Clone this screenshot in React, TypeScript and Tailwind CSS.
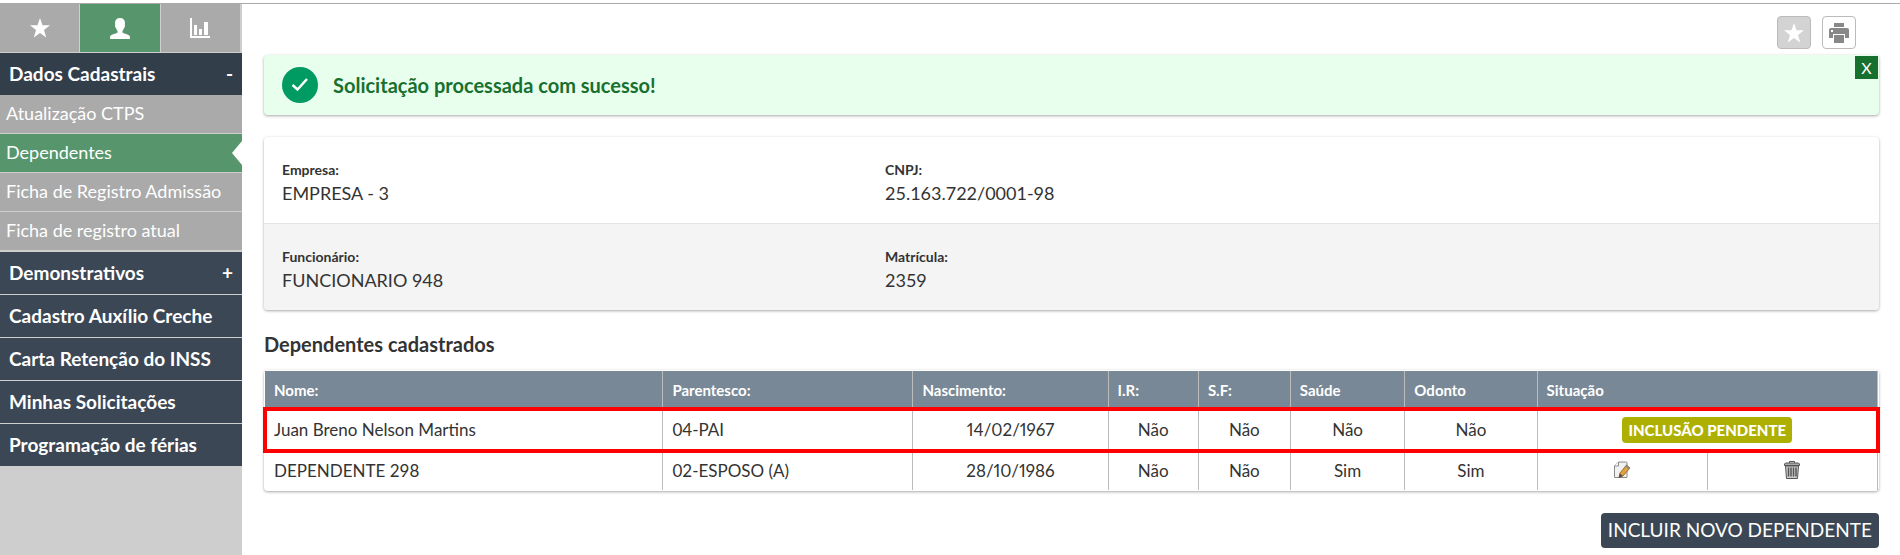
import { useState } from "react";

const subItems = ["Atualização CTPS", "Dependentes", "Ficha de Registro Admissão", "Ficha de registro atual"];
const menuItems = ["Cadastro Auxílio Creche", "Carta Retenção do INSS", "Minhas Solicitações", "Programação de férias"];

const company = [
  { label: "Empresa:", value: "EMPRESA - 3" },
  { label: "CNPJ:", value: "25.163.722/0001-98" },
];

const employee = [
  { label: "Funcionário:", value: "FUNCIONARIO 948" },
  { label: "Matrícula:", value: "2359" },
];

const headers = ["Nome:", "Parentesco:", "Nascimento:", "I.R:", "S.F:", "Saúde", "Odonto"];

const dependents = [
  { name: "Juan Breno Nelson Martins", kinship: "04-PAI", values: ["14/02/1967", "Não", "Não", "Não", "Não"], pending: true },
  { name: "DEPENDENTE 298", kinship: "02-ESPOSO (A)", values: ["28/10/1986", "Não", "Não", "Sim", "Sim"], pending: false },
];

function StarIcon() {
  return (
    <svg width="20" height="20" viewBox="0 0 20 20" fill="currentColor" aria-hidden="true">
      <path d="M10 0l2.500 7.300H20l-6 4.600 2.200 7.600L10 15l-6.200 4.500L6 11.900 0 7.300h7.500z" />
    </svg>
  );
}

function UserIcon() {
  return (
    <svg width="20" height="21" viewBox="0 0 20 21" fill="currentColor" aria-hidden="true">
      <path d="M10 0c3.300 0 5 2 5 5 0 1-.1 1.600-.3 2 .7.600.3 2.200-.6 2.800-.3 1.400-.9 2.400-1.600 3v1.600c1 1 6.500 2 7.200 3.600.3.800.3 2 .3 3H0c0-1 0-2.200.3-3 .7-1.600 6.200-2.600 7.200-3.600v-1.600c-.7-.6-1.300-1.600-1.600-3C5 9.200 4.600 7.600 5.300 7 5.100 6.600 5 6 5 5c0-3 1.700-5 5-5z" />
    </svg>
  );
}

function ChartIcon() {
  return (
    <svg width="20" height="20" viewBox="0 0 20 20" fill="currentColor" aria-hidden="true">
      <path d="M0 0h2v18h18v2H0zM4 7h3v10H4zM9 11h3v6H9zM14 4h4v13h-4z" />
    </svg>
  );
}

function PrinterIcon() {
  return (
    <svg width="20" height="20" viewBox="0 0 20 20" fill="currentColor" aria-hidden="true">
      <path d="M5 0h10v4H5z" />
      <path fillRule="evenodd" d="M2 5h16a2 2 0 0 1 2 2v8h-4v-4H4v4H0V7a2 2 0 0 1 2-2zm0 2v2h2V7z" />
      <path d="M5 12h10v8H5z" />
    </svg>
  );
}

function EditIcon() {
  return (
    <svg width="18" height="18" viewBox="0 0 18 18" aria-hidden="true">
      <path d="M5.500 1H13q1 0 1 1v14.500H1.500V5z" fill="#f1f1f1" stroke="#8a8a8a" />
      <path d="M5.500 1v4h-4" fill="#fff" stroke="#8a8a8a" />
      <path d="M7 12l6.500-8 3.500 3-7 8-4 1.500z" fill="#e0a23f" stroke="#8a5a20" strokeWidth=".8" />
      <path d="M6.800 12.500l3 2.500-3.800 1.500z" fill="#4a4a4a" />
      <path d="M13.500 4l3.500 3-1.300 1.500-3.500-3z" fill="#8f8a84" />
    </svg>
  );
}

function TrashIcon() {
  return (
    <svg width="18" height="18" viewBox="0 0 18 18" fill="none" stroke="#555" aria-hidden="true">
      <path d="M6.500 2V.500h5V2" />
      <path d="M1.500 4.500V3l1-1h13l1 1v1.500z" fill="#aaa" />
      <path d="M2.500 5l1 12.500h11l1-12.500z" fill="#ccc" />
      <path d="M5.500 6.500v9M8 6.500v9M10.500 6.500v9M13 6.500v9" strokeWidth="1.500" />
    </svg>
  );
}

function CheckIcon() {
  return (
    <svg width="36" height="36" viewBox="0 0 36 36" aria-hidden="true">
      <circle cx="18" cy="18" r="18" fill="#009a63" />
      <path d="M10.500 18l5 4.500L25 12" fill="none" stroke="#fff" strokeWidth="2.500" />
    </svg>
  );
}

function InfoRow({ items }: { items: { label: string; value: string }[] }) {
  return (
    <dl className="grid grid-cols-[603px_1fr] px-[18px] pt-[23px] pb-[17px]">
      {items.map((item) => (
        <div key={item.label}>
          <dt className="text-sm leading-5 font-bold">{item.label}</dt>
          <dd className="text-lg leading-[26px] font-normal">{item.value}</dd>
        </div>
      ))}
    </dl>
  );
}

function Sidebar() {
  return (
    <aside className="w-[242px] shrink-0 bg-[#cecece] text-white">
      <div className="grid h-12 grid-cols-3 gap-px pr-0.5">
        <button type="button" aria-label="Favoritos" className="flex items-center justify-center bg-[#aaa]">
          <StarIcon />
        </button>
        <button type="button" aria-label="Funcionário" className="flex items-center justify-center bg-[#57966c]">
          <UserIcon />
        </button>
        <button type="button" aria-label="Relatórios" className="flex items-center justify-center bg-[#aaa]">
          <ChartIcon />
        </button>
      </div>
      <nav className="mt-px text-[19px]">
        <button
          type="button"
          className="flex h-[42px] w-full items-center justify-between bg-[#333e4b] px-[9px] font-bold"
        >
          <span>Dados Cadastrais</span>
          <span>-</span>
        </button>
        <ul className="pb-px text-lg">
          {subItems.map((item) => (
            <li key={item} className="border-b border-[#cecece]">
              <a
                href="#"
                className={`relative flex h-[38px] items-center px-[6px] pb-0.5 ${item === "Dependentes" ? "bg-[#57966c]" : "bg-[#aaa]"}`}
              >
                {item}
                {item === "Dependentes" ? (
                  <svg className="absolute top-[7px] right-0" width="10" height="24" viewBox="0 0 10 24" aria-hidden="true">
                    <path d="M10 0v24L0 12z" fill="#fff" />
                  </svg>
                ) : null}
              </a>
            </li>
          ))}
        </ul>
        <button
          type="button"
          className="flex h-[43px] w-full items-center justify-between border-b border-[#cecece] bg-[#3b4754] px-[9px] font-bold"
        >
          <span>Demonstrativos</span>
          <span>+</span>
        </button>
        {menuItems.map((item) => (
          <a
            key={item}
            href="#"
            className="flex h-[43px] items-center border-b border-[#cecece] bg-[#3b4754] px-[9px] font-bold"
          >
            {item}
          </a>
        ))}
      </nav>
    </aside>
  );
}

export default function App() {
  const [showNotice, setShowNotice] = useState(true);

  return (
    <div className="flex min-h-screen flex-col bg-white pt-[3px] font-['Lato',sans-serif] text-[#333]">
      <div className="flex flex-1 border-t border-[#aaa]">
        <Sidebar />
        <main className="min-w-0 flex-1 pr-[21px] pl-[22px]">
          <div className="flex justify-end gap-[11px] pt-3 pr-[23px]">
            <button
              type="button"
              aria-label="Favoritar"
              className="flex h-[33px] w-[34px] items-center justify-center rounded-sm border border-[#bbb] bg-[#d3d3d3] text-white"
            >
              <StarIcon />
            </button>
            <button
              type="button"
              aria-label="Imprimir"
              className="flex h-[33px] w-[34px] items-center justify-center rounded-sm border border-[#bbb] bg-white text-[#888]"
            >
              <PrinterIcon />
            </button>
          </div>

          {showNotice ? (
            <div
              role="status"
              className="relative mt-[6px] flex h-[60px] items-center gap-[15px] rounded-sm bg-[#e8ffed] px-[18px] text-[#18702f] shadow-[0_1px_3px_rgba(0,0,0,0.35)]"
            >
              <CheckIcon />
              <p className="text-xl font-bold">Solicitação processada com sucesso!</p>
              <button
                type="button"
                aria-label="Fechar"
                onClick={() => setShowNotice(false)}
                className="absolute top-px right-px h-[23px] w-[23px] bg-[#18702f] text-base leading-[23px] text-white"
              >
                X
              </button>
            </div>
          ) : null}

          <section className="mt-[22px] rounded-sm bg-white shadow-[0_1px_3px_rgba(0,0,0,0.35)]">
            <InfoRow items={company} />
            <div className="rounded-b-sm border-t border-[#e4e4e4] bg-[#f4f4f4]">
              <InfoRow items={employee} />
            </div>
          </section>

          <h2 className="mt-5 text-xl leading-7 font-bold">Dependentes cadastrados</h2>

          <div className="mt-3 rounded-sm p-px shadow-[0_1px_3px_rgba(0,0,0,0.35)]">
            <table className="w-full table-fixed border-separate border-spacing-0 text-[17px]">
              <colgroup>
                <col className="w-[24.7%]" />
                <col className="w-[15.5%]" />
                <col className="w-[12.1%]" />
                <col className="w-[5.6%]" />
                <col className="w-[5.7%]" />
                <col className="w-[7.1%]" />
                <col className="w-[8.2%]" />
                <col />
                <col />
              </colgroup>
              <thead>
                <tr className="h-[38px] bg-[#798896] text-left text-[15px] text-white">
                  {headers.map((header) => (
                    <th key={header} scope="col" className="border-r border-[#bbb] px-[9px] font-bold">
                      {header}
                    </th>
                  ))}
                  <th scope="col" colSpan={2} className="border-r border-[#bbb] px-[9px] font-bold">
                    Situação
                  </th>
                </tr>
              </thead>
              <tbody>
                {dependents.map((dependent) => (
                  <tr
                    key={dependent.name}
                    className={dependent.pending ? "h-[42px] outline-4 -outline-offset-2 outline-[#f00]" : "h-[39px]"}
                  >
                    <td className="border-r border-[#bbb] px-[9px]">{dependent.name}</td>
                    <td className="border-r border-[#bbb] px-[9px]">{dependent.kinship}</td>
                    {dependent.values.map((value, index) => (
                      <td key={index} className="border-r border-[#bbb] text-center proportional-nums">
                        {value}
                      </td>
                    ))}
                    {dependent.pending ? (
                      <td colSpan={2} className="border-r border-[#bbb] text-center">
                        <span className="inline-block rounded-sm bg-[#adb000] px-[6px] text-[15px] leading-[26px] font-black text-white">
                          INCLUSÃO PENDENTE
                        </span>
                      </td>
                    ) : (
                      <>
                        <td className="border-r border-[#bbb] pb-1 text-center">
                          <button type="button" aria-label="Editar" className="align-middle">
                            <EditIcon />
                          </button>
                        </td>
                        <td className="border-r border-[#bbb] pb-1 text-center">
                          <button type="button" aria-label="Excluir" className="align-middle">
                            <TrashIcon />
                          </button>
                        </td>
                      </>
                    )}
                  </tr>
                ))}
              </tbody>
            </table>
          </div>

          <div className="mt-[22px] flex justify-end">
            <button type="button" className="h-[35px] rounded-sm bg-[#3b4754] px-[7px] text-[19px] text-white">
              INCLUIR NOVO DEPENDENTE
            </button>
          </div>
        </main>
      </div>
    </div>
  );
}
